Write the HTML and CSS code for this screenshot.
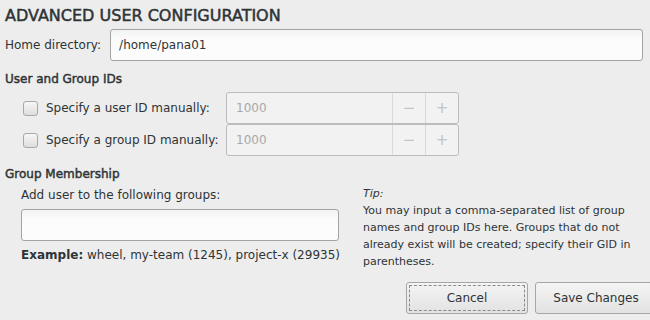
FILE: index.html
```html
<!DOCTYPE html>
<html lang="en">
<head>
    <meta charset="UTF-8">
    <title>Advanced User Configuration</title>
    <link rel="stylesheet" href="styles.css">
</head>
<body>
    <div class="dialog">
        <h1>ADVANCED USER CONFIGURATION</h1>

        <!-- Home directory -->
        <div class="home-row">
            <label for="home">Home directory:</label>
            <input id="home" class="entry" type="text" value="/home/pana01">
        </div>

        <!-- User and group IDs -->
        <h2>User and Group IDs</h2>
        <div class="id-grid">
            <label class="check"><span class="box"></span>Specify a user ID manually:</label>
            <div class="spin">
                <span class="spin-value">1000</span>
                <span class="spin-btn">&minus;</span>
                <span class="spin-btn">+</span>
            </div>
            <label class="check"><span class="box"></span>Specify a group ID manually:</label>
            <div class="spin">
                <span class="spin-value">1000</span>
                <span class="spin-btn">&minus;</span>
                <span class="spin-btn">+</span>
            </div>
        </div>

        <!-- Group membership -->
        <h2>Group Membership</h2>
        <div class="groups">
            <div class="groups-left">
                <label for="groups">Add user to the following groups:</label>
                <input id="groups" class="entry" type="text">
                <p class="example"><b>Example:</b> wheel, my-team (1245), project-x (29935)</p>
            </div>
            <div class="tip">
                <i>Tip:</i><br>
                You may input a comma-separated list of group names and group IDs here. Groups that do not already exist will be created; specify their GID in parentheses.
            </div>
        </div>

        <div class="actions">
            <button class="btn cancel">Cancel</button>
            <button class="btn">Save Changes</button>
        </div>
    </div>
</body>
</html>
```

FILE: styles.css
```css
body {
    margin: 0;
    background-color: #ededed;
    font-family: 'DejaVu Sans', sans-serif;
    font-size: 12px;
    color: #2e3436;
}
.dialog {
    padding: 5px 7px 0 5px;
}
h1 {
    margin: 0;
    font-size: 16px;
    font-weight: normal;
    -webkit-text-stroke: 0.5px #2e3436;
    line-height: 22px;
    color: #2e3436;
}
h2 {
    margin: 0;
    font-size: 12px;
    font-weight: normal;
    -webkit-text-stroke: 0.45px #2e3436;
    line-height: 16px;
}
.entry {
    box-sizing: border-box;
    height: 32px;
    border: 1px solid #a3a3a3;
    border-radius: 3px;
    background: linear-gradient(#f3f3f3, #fcfcfc 10px);
    font-family: inherit;
    font-size: 12px;
    color: #2e3436;
    padding: 0 8px;
}
.home-row {
    display: flex;
    align-items: center;
    gap: 9px;
    margin: 2px 0 10px;
}
.home-row .entry {
    flex: 1;
}
.id-grid {
    display: grid;
    grid-template-columns: 203px 233px;
    padding: 5px 0 10px 18px;
    align-items: center;
}
.check {
    display: flex;
    align-items: center;
    gap: 8px;
}
.box {
    width: 13px;
    height: 13px;
    border: 1px solid #a8a8a8;
    border-radius: 3px;
    background: linear-gradient(#f6f6f6, #dedede);
}
.spin {
    display: flex;
    height: 32px;
    box-sizing: border-box;
    border: 1px solid #bcbcbc;
    border-radius: 3px;
    background-color: #f2f2f2;
    color: #a8a8a8;
}
.spin-value {
    flex: 1;
    padding-left: 9px;
    line-height: 30px;
}
.spin-btn {
    width: 32px;
    border-left: 1px solid #dadada;
    text-align: center;
    line-height: 30px;
    font-size: 15px;
    color: #c4c4c4;
}
.groups {
    display: flex;
    padding: 5px 0 0 16px;
}
.groups-left {
    width: 318px;
    display: flex;
    flex-direction: column;
}
.groups-left label {
    line-height: 16px;
    margin-bottom: 6px;
}
.groups-left .entry {
    width: 318px;
}
.example {
    margin: 6px 0 0;
    line-height: 16px;
    white-space: nowrap;
}
.tip {
    margin: -2px 0 0 24px;
    width: 270px;
    font-size: 11px;
    line-height: 17px;
}
.actions {
    display: flex;
    justify-content: flex-end;
    gap: 7px;
    margin: 12px -14px 0 0;
}
.btn {
    height: 32px;
    width: 122px;
    border: 1px solid #a6a6a6;
    border-radius: 3px;
    background: linear-gradient(#f4f4f4, #e2e2e2);
    font-family: inherit;
    font-size: 12px;
    color: #2e3436;
}
.cancel {
    outline: 1px dashed #8a8a8a;
    outline-offset: -4px;
}
```
